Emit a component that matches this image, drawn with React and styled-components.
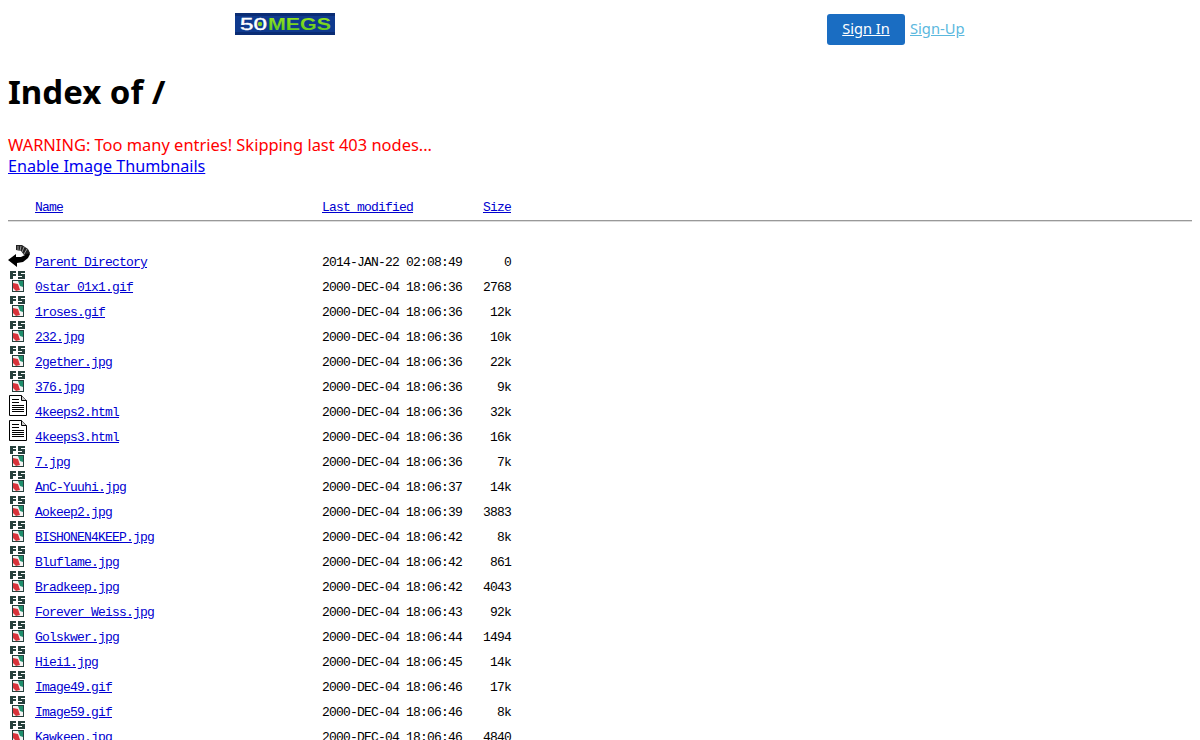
import styled, { createGlobalStyle } from 'styled-components';

const GlobalStyle = createGlobalStyle`
  html, body {
    margin: 0;
    background: #fff;
    overflow: hidden;
  }
  body {
    font-family: "Noto Sans", sans-serif;
    font-size: 16px;
    color: #000;
  }
`;

const files = [
  ['Parent Directory', '2014-JAN-22 02:08:49', '0', 'back'],
  ['0star_01x1.gif', '2000-DEC-04 18:06:36', '2768', 'image'],
  ['1roses.gif', '2000-DEC-04 18:06:36', '12k', 'image'],
  ['232.jpg', '2000-DEC-04 18:06:36', '10k', 'image'],
  ['2gether.jpg', '2000-DEC-04 18:06:36', '22k', 'image'],
  ['376.jpg', '2000-DEC-04 18:06:36', '9k', 'image'],
  ['4keeps2.html', '2000-DEC-04 18:06:36', '32k', 'text'],
  ['4keeps3.html', '2000-DEC-04 18:06:36', '16k', 'text'],
  ['7.jpg', '2000-DEC-04 18:06:36', '7k', 'image'],
  ['AnC-Yuuhi.jpg', '2000-DEC-04 18:06:37', '14k', 'image'],
  ['Aokeep2.jpg', '2000-DEC-04 18:06:39', '3883', 'image'],
  ['BISHONEN4KEEP.jpg', '2000-DEC-04 18:06:42', '8k', 'image'],
  ['Bluflame.jpg', '2000-DEC-04 18:06:42', '861', 'image'],
  ['Bradkeep.jpg', '2000-DEC-04 18:06:42', '4043', 'image'],
  ['Forever_Weiss.jpg', '2000-DEC-04 18:06:43', '92k', 'image'],
  ['Golskwer.jpg', '2000-DEC-04 18:06:44', '1494', 'image'],
  ['Hiei1.jpg', '2000-DEC-04 18:06:45', '14k', 'image'],
  ['Image49.gif', '2000-DEC-04 18:06:46', '17k', 'image'],
  ['Image59.gif', '2000-DEC-04 18:06:46', '8k', 'image'],
  ['Kawkeep.jpg', '2000-DEC-04 18:06:46', '4840', 'image'],
];

const LogoArt = () => (
  <svg width="100" height="22" viewBox="0 0 100 22">
    <defs>
      <linearGradient id="logoGreen" x1="0" y1="0" x2="0" y2="1">
        <stop offset="0" stopColor="#9be21e" />
        <stop offset="1" stopColor="#55c81e" />
      </linearGradient>
    </defs>
    <rect width="100" height="22" fill="#0f3a8e" />
    <rect x="0" y="0" width="100" height="3" fill="#0a2c74" />
    <rect x="0" y="19" width="100" height="3" fill="#0a2c74" />
    <text x="5" y="17" textLength="27" lengthAdjust="spacingAndGlyphs" fontFamily="Liberation Sans" fontSize="17" fill="#fff" stroke="#fff" strokeWidth="0.4">50</text>
    <circle cx="25" cy="11" r="2.2" fill="#86d41f" />
    <text x="33" y="17" textLength="63" lengthAdjust="spacingAndGlyphs" fontFamily="Liberation Sans" fontWeight="bold" fontSize="17" fill="url(#logoGreen)">MEGS</text>
  </svg>
);

const BackIcon = () => (
  <svg width="22" height="22" viewBox="0 0 22 22">
    <path d="M0 15L8 9v3h5l4-2-2-3 5-2 2 4-2 4-5 4-6 1v4z" fill="#000" />
    <path d="M8 0h6l6 4 2 4-6 2-3-4-5-1z" fill="#222" />
    <path d="M10 1v4M13 1l-1 5M16 2l-2 5M19 4l-3 5" stroke="#999" strokeWidth="1" fill="none" />
  </svg>
);

const ImageIcon = () => (
  <svg width="20" height="22" viewBox="0 0 20 22">
    <path d="M2 1h6v2H5v1h3v2H5v3H2zM10 1h7v2h-4v1h4v5h-7V7h4V6h-4z" fill="#26403c" />
    <rect x="4" y="10" width="12" height="12" fill="#26403c" />
    <rect x="5" y="11" width="10" height="10" fill="#f2f2f2" />
    <path d="M5 13l5 1 2 6-4 1-3-3z" fill="#d8333a" />
    <path d="M10 11h5v6l-3-1z" fill="#1f8f6c" />
  </svg>
);

const TextIcon = () => (
  <svg width="20" height="22" viewBox="0 0 20 22">
    <path d="M1.5 0.5h12l5 5v15h-17z" fill="#fff" stroke="#000" />
    <path d="M13.5 0.5v5h5" fill="#ccc" stroke="#000" />
    <path d="M4 4.5h7M4 7.5h7M4 10.5h12M4 12.5h12M4 14.5h12M4 16.5h12" stroke="#000" strokeWidth="1" />
  </svg>
);

const icons = { back: BackIcon, image: ImageIcon, text: TextIcon };

const Page = styled.div`
  padding: 0 8px;
  height: 740px;
  overflow: hidden;
`;

const TopBar = styled.div`
  display: flex;
  align-items: flex-start;
  height: 46px;
  padding-left: 227px;
`;

const Logo = styled.div`
  width: 100px;
  height: 22px;
  margin-top: 13px;

  svg {
    display: block;
  }
`;

const Account = styled.div`
  display: flex;
  align-items: center;
  margin-left: 492px;
  margin-top: 14px;
  gap: 5px;
`;

const SignIn = styled.a`
  display: block;
  width: 78px;
  height: 31px;
  line-height: 29px;
  text-align: center;
  border-radius: 3px;
  background: #1a6dc2;
  color: #fff;
  font-size: 14.6px;
  text-decoration: underline;
`;

const SignUp = styled.a`
  color: #5bb8de;
  font-size: 14.7px;
  line-height: 29px;
  margin-bottom: 2px;
  text-decoration: underline;
`;

const Title = styled.h1`
  margin: 0;
  padding-top: 20px;
  font-size: 33px;
  line-height: 52px;
  font-weight: bold;
`;

const Warning = styled.div`
  margin-top: 16px;
  color: #f00;
  font-size: 16.45px;
  line-height: 22px;
`;

const ThumbLink = styled.a`
  display: block;
  color: #00e;
  font-size: 16.15px;
  line-height: 21px;
  text-decoration: underline;
`;

const Listing = styled.div`
  font-family: "Liberation Mono", monospace;
  font-size: 13px;
  letter-spacing: -0.8px;
  white-space: pre;
  margin-top: 23px;
`;

const Row = styled.div`
  display: flex;
  align-items: flex-end;
  height: ${(p) => p.$height || 25}px;
`;

const IconSlot = styled.div`
  width: 27px;
  flex-shrink: 0;
  display: flex;
  align-items: flex-end;
  margin-bottom: 4px;

  svg {
    display: block;
  }
`;

const NameCell = styled.div`
  width: 287px;
  flex-shrink: 0;
  line-height: 16px;
`;

const DateCell = styled.div`
  width: 140px;
  flex-shrink: 0;
  line-height: 16px;
`;

const SizeCell = styled.div`
  width: 49px;
  flex-shrink: 0;
  text-align: right;
  line-height: 16px;
`;

const FileLink = styled.a`
  color: #0000d0;
  text-decoration: underline;
`;

const Rule = styled.hr`
  margin: 4px 0 24px;
  border: 0;
  border-top: 1px solid #999;
  border-bottom: 1px solid #ddd;
`;

const App = () => (
  <Page>
    <GlobalStyle />
    <TopBar>
      <Logo><LogoArt /></Logo>
      <Account>
        <SignIn href="#">Sign In</SignIn>
        <SignUp href="#">Sign-Up</SignUp>
      </Account>
    </TopBar>
    <Title>Index of /</Title>
    <Warning>WARNING: Too many entries! Skipping last 403 nodes...</Warning>
    <ThumbLink href="#">Enable Image Thumbnails</ThumbLink>
    <Listing>
      <Row $height={16}>
        <IconSlot />
        <NameCell><FileLink href="#">Name</FileLink></NameCell>
        <DateCell><FileLink href="#">Last modified</FileLink></DateCell>
        <SizeCell><FileLink href="#">Size</FileLink></SizeCell>
      </Row>
      <Rule />
      {files.map(([name, date, size, type]) => {
        const Icon = icons[type];
        return (
          <Row key={name}>
            <IconSlot><Icon /></IconSlot>
            <NameCell><FileLink href="#">{name}</FileLink></NameCell>
            <DateCell>{date}</DateCell>
            <SizeCell>{size}</SizeCell>
          </Row>
        );
      })}
    </Listing>
  </Page>
);

export default App;
